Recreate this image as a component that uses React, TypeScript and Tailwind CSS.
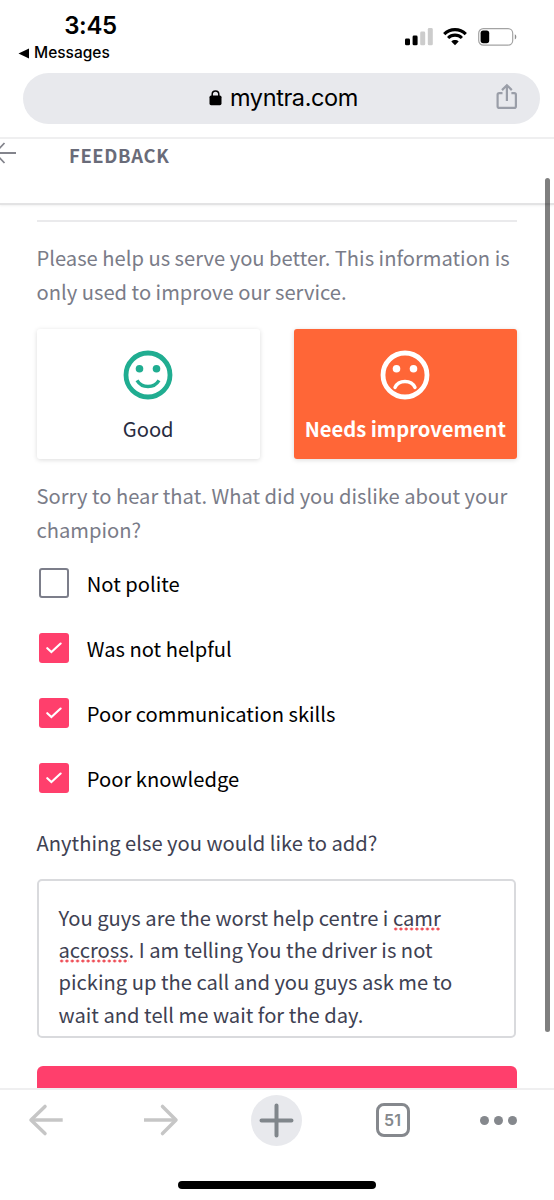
import { useState } from 'react';

const reasons = ['Not polite', 'Was not helpful', 'Poor communication skills', 'Poor knowledge'];

function StatusBar() {
  return (
    <div className="h-[73px] flex justify-between pl-[17.5px] pr-[37px] shrink-0">
      <div className="w-[146px] pt-[11px]">
        <div className="text-center text-[24px] leading-[30px] font-semibold tracking-[-0.35px]">3:45</div>
        <div className="flex items-center gap-[5.5px] h-[24px] text-[15.5px] font-medium">
          <svg width="11" height="11" viewBox="0 0 11 11"><path d="M0.5 5.5L11 0.5V10.5Z" /></svg>
          <span>Messages</span>
        </div>
      </div>
      <div className="flex items-start gap-[11px] pt-[28px]">
        <svg className="-mr-[1px]" width="28" height="18" viewBox="0 0 28 18">
          <rect x="0" y="10.5" width="5" height="6.8" rx="1.4" />
          <rect x="7.6" y="7.5" width="5" height="9.8" rx="1.4" />
          <rect x="15.2" y="3.6" width="5" height="13.7" rx="1.4" fill="#ccc" />
          <rect x="22.8" y="0" width="5" height="17.3" rx="1.4" fill="#ccc" />
        </svg>
        <svg width="24" height="18" viewBox="0 0 24 18" fill="none" stroke="#000" strokeWidth="3.1">
          <path d="M1.2 6.1C7.2 0.1 16.8 0.1 22.8 6.1" />
          <path d="M5.1 10C9 6.2 15 6.2 18.9 10" />
          <path d="M12 17.2L8.3 13.5C10.4 11.6 13.6 11.6 15.7 13.5Z" fill="#000" stroke="none" />
        </svg>
        <svg width="39" height="18" viewBox="0 0 39 18">
          <rect x="0.7" y="0.7" width="34" height="16.4" rx="4.6" fill="none" stroke="#a3a3a3" strokeWidth="1.2" />
          <rect x="2.6" y="2.6" width="8.6" height="12.6" rx="2.6" />
          <path d="M36.8 6.3C38.8 7.2 38.8 10.6 36.8 11.5Z" fill="#8e8e8e" />
        </svg>
      </div>
    </div>
  );
}

function AddressBar() {
  return (
    <div className="h-[64px] px-[23px] shrink-0">
      <div className="h-[50.5px] w-[517px] rounded-full bg-[#e8e9ed] flex items-center pl-[186px] pr-[22px]">
        <svg width="13" height="16" viewBox="0 0 13 16">
          <rect x="0.5" y="5.6" width="12" height="9.6" rx="1.6" />
          <path d="M3.2 6V4.2a3.3 3.3 0 0 1 6.6 0V6" fill="none" stroke="#000" strokeWidth="1.5" />
        </svg>
        <span className="ml-[8px] text-[23.5px] leading-[30px] tracking-[-0.4px]">myntra.com</span>
        <svg className="ml-auto -mt-[3px]" width="22" height="27" viewBox="0 0 22 27" fill="none" stroke="#9a9ea8" strokeWidth="2.2">
          <path d="M6.5 10.2H3.2C2.1 10.2 1.6 10.8 1.6 11.8V23.2C1.6 24.3 2.2 24.9 3.3 24.9H18.2C19.3 24.9 19.9 24.3 19.9 23.2V11.8C19.9 10.8 19.4 10.2 18.3 10.2H15.4" />
          <path d="M10.9 18V2.5M6 7.1L10.9 2.2L15.8 7.1" />
        </svg>
      </div>
    </div>
  );
}

function Face({ sad }: { sad?: boolean }) {
  return (
    <svg width="50" height="50" viewBox="0 0 50 50" fill="none" stroke="currentColor">
      <circle cx="25" cy="25" r="22" strokeWidth="4.8" />
      <circle cx="16.5" cy="18.8" r="3.8" fill="currentColor" stroke="none" />
      <circle cx="33.5" cy="18.8" r="3.8" fill="currentColor" stroke="none" />
      {sad ? (
        <path d="M15 37.5C18.6 29.5 31.4 29.5 35 37.5" strokeWidth="3.4" strokeLinecap="round" />
      ) : (
        <path d="M14 30.3C19 38.6 31 38.6 36 30.3" strokeWidth="3.4" />
      )}
    </svg>
  );
}

function Misspelled({ word }: { word: string }) {
  return (
    <span className="bg-[radial-gradient(circle,#ee4f58_1.2px,transparent_1.8px)] bg-[length:5.3px_4px] bg-repeat-x bg-[position:0_calc(100%-0.6px)]">
      {word}
    </span>
  );
}

function Toolbar() {
  return (
    <div className="h-[112px] border-t-2 border-[#efeff0] bg-white shrink-0 flex flex-col">
      <div className="h-[60px] flex items-center">
        <svg className="ml-[28px]" width="36" height="34" viewBox="0 0 36 34" fill="none" stroke="#c6c6c6" strokeWidth="3.5" strokeLinecap="round" strokeLinejoin="round">
          <path d="M17 3.4L3 17L17 30.6" />
          <path d="M4 17H34.7" strokeLinecap="butt" />
        </svg>
        <svg className="ml-[79px]" width="36" height="34" viewBox="0 0 36 34" fill="none" stroke="#c6c6c6" strokeWidth="3.5" strokeLinecap="round" strokeLinejoin="round">
          <path d="M19.5 3.4L33 17L19.5 30.6" />
          <path d="M1 17H32.5" strokeLinecap="butt" />
        </svg>
        <div className="ml-[72px] size-[51px] rounded-full bg-[#e8e9ed] flex items-center justify-center">
          <svg width="35" height="35" viewBox="0 0 35 35" stroke="#80868b" strokeWidth="4" strokeLinecap="round">
            <path d="M17.5 2.5V32.5M2.5 17.5H32.5" />
          </svg>
        </div>
        <div className="ml-[73.5px] size-[34px] rounded-[8px] border-[3.5px] border-[#85888d] flex items-center justify-center text-[16px] leading-none font-semibold text-[#85888d]">
          51
        </div>
        <div className="ml-[70px] flex gap-[5.3px]">
          <span className="size-[9px] rounded-full bg-[#85888d]" />
          <span className="size-[9px] rounded-full bg-[#85888d]" />
          <span className="size-[9px] rounded-full bg-[#85888d]" />
        </div>
      </div>
      <div className="mt-[31px] mx-auto w-[198px] h-[7.5px] rounded-full bg-black" />
    </div>
  );
}

export default function App() {
  const [rating, setRating] = useState('bad');
  const [checked, setChecked] = useState([false, true, true, true]);

  const toggle = (i: number) => setChecked(checked.map((c, j) => (j === i ? !c : c)));

  return (
    <div className="relative w-[554px] h-[1200px] overflow-hidden bg-white text-black flex flex-col font-['Inter',sans-serif]">
      <StatusBar />
      <AddressBar />

      <div className="flex-1 min-h-0 overflow-hidden border-t-2 border-[#efeff0] font-['Noto_Sans_CJK_SC',sans-serif] text-[20.17px]">
        <header className="h-[66px] flex border-b-2 border-[#e3e3e4] shadow-[0_1px_2px_rgba(0,0,0,0.06)]">
          <svg className="mt-[2px] -ml-[8px]" width="25" height="24" viewBox="0 0 25 24" fill="none" stroke="#83848c" strokeWidth="1.8">
            <path d="M24 12H3M12.5 2L3 12L12.5 22" />
          </svg>
          <h1 className="ml-[52px] mt-[1px] text-[18.4px] leading-[30px] font-bold tracking-[0.65px] text-[#696b79]">FEEDBACK</h1>
        </header>

        <main className="ml-[36.5px] w-[480.5px] pt-[15px]">
          <hr className="border-0 h-[1.5px] bg-[#eaeaec]" />
          <p className="mt-[19.5px] leading-[34px] text-[#7a7c88] whitespace-nowrap">
            Please help us serve you better. This information is<br />only used to improve our service.
          </p>

          <div className="mt-[20px] flex justify-between">
            <button
              onClick={() => setRating('good')}
              className="w-[223.4px] h-[130px] rounded-[3px] bg-white shadow-[0_1px_5px_rgba(0,0,0,0.14)] flex flex-col items-center pt-[20.5px] text-[#20ad91]"
            >
              <Face />
              <span className="mt-[12px] leading-[34px] text-[#282c3f]">Good</span>
            </button>
            <button
              onClick={() => setRating('bad')}
              className="w-[223.4px] h-[130px] rounded-[3px] bg-[#ff6637] shadow-[0_1px_5px_rgba(0,0,0,0.14)] flex flex-col items-center pt-[20.5px] text-white"
            >
              <Face sad />
              <span className={`mt-[12px] leading-[34px] whitespace-nowrap ${rating === 'bad' ? 'font-bold' : ''}`}>Needs improvement</span>
            </button>
          </div>

          <p className="mt-[19.5px] leading-[34px] text-[#7a7c88] whitespace-nowrap">
            Sorry to hear that. What did you dislike about your<br />champion?
          </p>

          <div className="mt-[21.5px] ml-[2px] flex flex-col gap-[35px]">
            {reasons.map((reason, i) => (
              <div key={reason} onClick={() => toggle(i)} className="h-[30px] flex items-center">
                {checked[i] ? (
                  <span className="size-[30px] rounded-[3px] bg-[#ff3f6c] flex items-center justify-center">
                    <svg width="16" height="12" viewBox="0 0 16 12" fill="none" stroke="#fff" strokeWidth="2.1" strokeLinecap="round">
                      <path d="M1.3 6.2L5.4 10.1L14.6 1.5" />
                    </svg>
                  </span>
                ) : (
                  <span className="size-[30px] rounded-[3px] border-2 border-[#7c7e8a]" />
                )}
                <span className="ml-[18.3px] leading-[30px] mt-[2px]">{reason}</span>
              </div>
            ))}
          </div>

          <p className="mt-[33px] leading-[34px] text-[#3e4152] whitespace-nowrap">Anything else you would like to add?</p>
          <div className="mt-[19px] w-[479.5px] h-[158.5px] rounded-[5px] border-2 border-[#d9dadd] pl-[20px] pt-[20.7px] leading-[32.3px] text-[#3e4152] whitespace-nowrap">
            You guys are the worst help centre i <Misspelled word="camr" /><br />
            <Misspelled word="accross" />. I am telling You the driver is not<br />
            picking up the call and you guys ask me to<br />
            wait and tell me wait for the day.
          </div>
          <button className="mt-[28px] block w-full h-[60px] rounded-[6px] bg-[#ff3f6c]" aria-label="Submit" />
        </main>
      </div>

      <Toolbar />
      <div className="absolute left-[545px] top-[178px] w-[5px] h-[854px] rounded-full bg-black/50" />
    </div>
  );
}
